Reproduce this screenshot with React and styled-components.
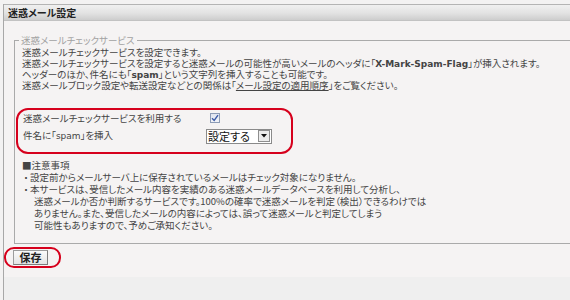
import React from 'react';
import styled, { createGlobalStyle } from 'styled-components';

const GlobalStyle = createGlobalStyle`
    html, body {
        margin: 0;
        padding: 0;
        background: #f3f2f2;
    }
    body {
        font-family: "Noto Sans CJK JP", sans-serif;
        font-feature-settings: "palt";
        color: #444;
    }
`;

function App() {
    return (
        <Page>
            <GlobalStyle />
            <Panel>
                <Header>迷惑メール設定</Header>
                <Body>
                    <Fieldset>
                        <Legend>迷惑メールチェックサービス</Legend>
                        <Intro>
                            <Line>迷惑メールチェックサービスを設定できます。</Line>
                            <Line>迷惑メールチェックサービスを設定すると迷惑メールの可能性が高いメールのヘッダに「<Latin $bold>X-Mark-Spam-Flag</Latin>」が挿入されます。</Line>
                            <Line>ヘッダーのほか、件名にも「<Latin $bold>spam</Latin>」という文字列を挿入することも可能です。</Line>
                            <Line>迷惑メールブロック設定や転送設定などとの関係は「<Link>メール設定の適用順序</Link>」をご覧ください。</Line>
                        </Intro>

                        <Highlight>
                            <SettingRow>
                                <SettingLabel>迷惑メールチェックサービスを利用する</SettingLabel>
                                <Checkbox>
                                    <svg width="8" height="8" viewBox="0 0 8 8">
                                        <path d="M1 4.2 L3.2 6.4 L7 1.2" fill="none" stroke="#3b5aa6" strokeWidth="1.4" />
                                    </svg>
                                </Checkbox>
                            </SettingRow>
                            <SettingRow>
                                <SettingLabel>件名に「<Latin>spam</Latin>」を挿入</SettingLabel>
                                <Select>
                                    <SelectValue>設定する</SelectValue>
                                    <SelectArrow>
                                        <svg width="6" height="4" viewBox="0 0 6 4">
                                            <path d="M0 0 H6 L3 3.5 Z" fill="#111" />
                                        </svg>
                                    </SelectArrow>
                                </Select>
                            </SettingRow>
                        </Highlight>

                        <Notes>
                            <Line>■注意事項</Line>
                            <NoteItem>
                                <Bullet>・</Bullet>
                                <NoteLines>
                                    <Line>設定前からメールサーバ上に保存されているメールはチェック対象になりません。</Line>
                                </NoteLines>
                            </NoteItem>
                            <NoteItem>
                                <Bullet>・</Bullet>
                                <NoteLines>
                                    <Line>本サービスは、受信したメール内容を実績のある迷惑メールデータベースを利用して分析し、</Line>
                                    <Line $indent>迷惑メールか否か判断するサービスです。100%の確率で迷惑メールを判定（検出）できるわけでは</Line>
                                    <Line $indent>ありません。また、受信したメールの内容によっては、誤って迷惑メールと判定してしまう</Line>
                                    <Line $indent>可能性もありますので、予めご承知ください。</Line>
                                </NoteLines>
                            </NoteItem>
                        </Notes>
                    </Fieldset>

                    <SaveRing>
                        <SaveButton>保存</SaveButton>
                    </SaveRing>
                </Body>
            </Panel>
        </Page>
    );
}

const Page = styled.div`
    height: 300px;
    padding: 4px 0 0 3px;
    box-sizing: border-box;
    display: flex;
    flex-direction: column;
    overflow: hidden;
`;

const Panel = styled.div`
    flex: 1;
    border-left: 1px solid #a8a8a8;
    background: #efefef;
    overflow: hidden;
`;

const Header = styled.div`
    height: 15px;
    line-height: 15px;
    border-top: 1px solid #b4b4b4;
    border-bottom: 1px solid #c2c2c2;
    background: linear-gradient(#f0f0f0, #e2e2e2 55%, #cdcdcd);
    padding-left: 4px;
    font-size: 10px;
    font-weight: bold;
    color: #222;
`;

const Body = styled.div`
    background: #f5f3f3;
    padding: 12px 0 9px;
`;

const Fieldset = styled.fieldset`
    margin: 0 0 0 10px;
    padding: 0 0 12px 1px;
    width: 580px;
    border: 1px solid #aaaaaa;
    font-size: 9.5px;
    line-height: 11px;
`;

const Legend = styled.legend`
    margin-left: 3px;
    padding: 0 2px;
    line-height: 14px;
    color: #a2a2a2;
`;

const Intro = styled.div`
    padding-left: 6px;
`;

const Line = styled.div`
    height: 11px;
    white-space: nowrap;
    margin-left: ${p => (p.$indent ? '4px' : '0')};
`;

const Latin = styled.span`
    font-family: "DejaVu Sans", Verdana, sans-serif;
    font-size: 9px;
    font-weight: ${p => (p.$bold ? 'bold' : 'normal')};
`;

const Link = styled.span`
    text-decoration: underline;
`;

const Highlight = styled.div`
    margin-top: 17px;
    width: 277px;
    height: 46px;
    box-sizing: border-box;
    padding: 0 0 0 5px;
    border: 2px solid #d6001c;
    border-radius: 12px;
    display: flex;
    flex-direction: column;
    gap: 2px;
`;

const SettingRow = styled.div`
    height: 16px;
    display: grid;
    grid-template-columns: 183px auto;
    align-items: center;
`;

const SettingLabel = styled.span`
    white-space: nowrap;
`;

const Checkbox = styled.span`
    margin-left: 4px;
    width: 8px;
    height: 8px;
    border: 1px solid #8d9cb6;
    background: linear-gradient(#dfe4ef, #f2f4f9);
    display: flex;
    align-items: center;
    justify-content: center;
`;

const Select = styled.div`
    width: 63px;
    height: 13px;
    border: 1px solid #8a8a8a;
    background: #fff;
    display: flex;
    align-items: center;
    justify-content: space-between;
    padding-left: 1px;
`;

const SelectValue = styled.span`
    font-size: 11px;
    line-height: 13px;
    color: #111;
`;

const SelectArrow = styled.span`
    width: 10px;
    height: 10px;
    margin-right: 1px;
    border: 1px solid #8e8e8e;
    background: #ececec;
    display: flex;
    align-items: center;
    justify-content: center;
`;

const Notes = styled.div`
    margin-top: 6px;
    padding-left: 6px;
    display: flex;
    flex-direction: column;
    gap: 1px;
`;

const NoteItem = styled.div`
    display: grid;
    grid-template-columns: 8px auto;
`;

const NoteLines = styled.div`
    display: flex;
    flex-direction: column;
    gap: 1px;
`;

const Bullet = styled.span`
    height: 11px;
    text-align: center;
`;

const SaveRing = styled.div`
    margin-top: 3px;
    width: 57px;
    height: 21px;
    box-sizing: border-box;
    padding: 1px 0 0 7px;
    border: 2px solid #d6001c;
    border-radius: 10px;
    display: flex;
    align-items: flex-start;
`;

const SaveButton = styled.button`
    width: 35px;
    height: 15px;
    padding: 0;
    border: 1px solid #9c9c9c;
    border-right-color: #7d7d7d;
    border-bottom-color: #7d7d7d;
    background: linear-gradient(#fafafa, #e4e4e4);
    font-family: "Noto Sans CJK JP", sans-serif;
    font-size: 11px;
    font-weight: bold;
    line-height: 13px;
    color: #222;
`;

export default App;
